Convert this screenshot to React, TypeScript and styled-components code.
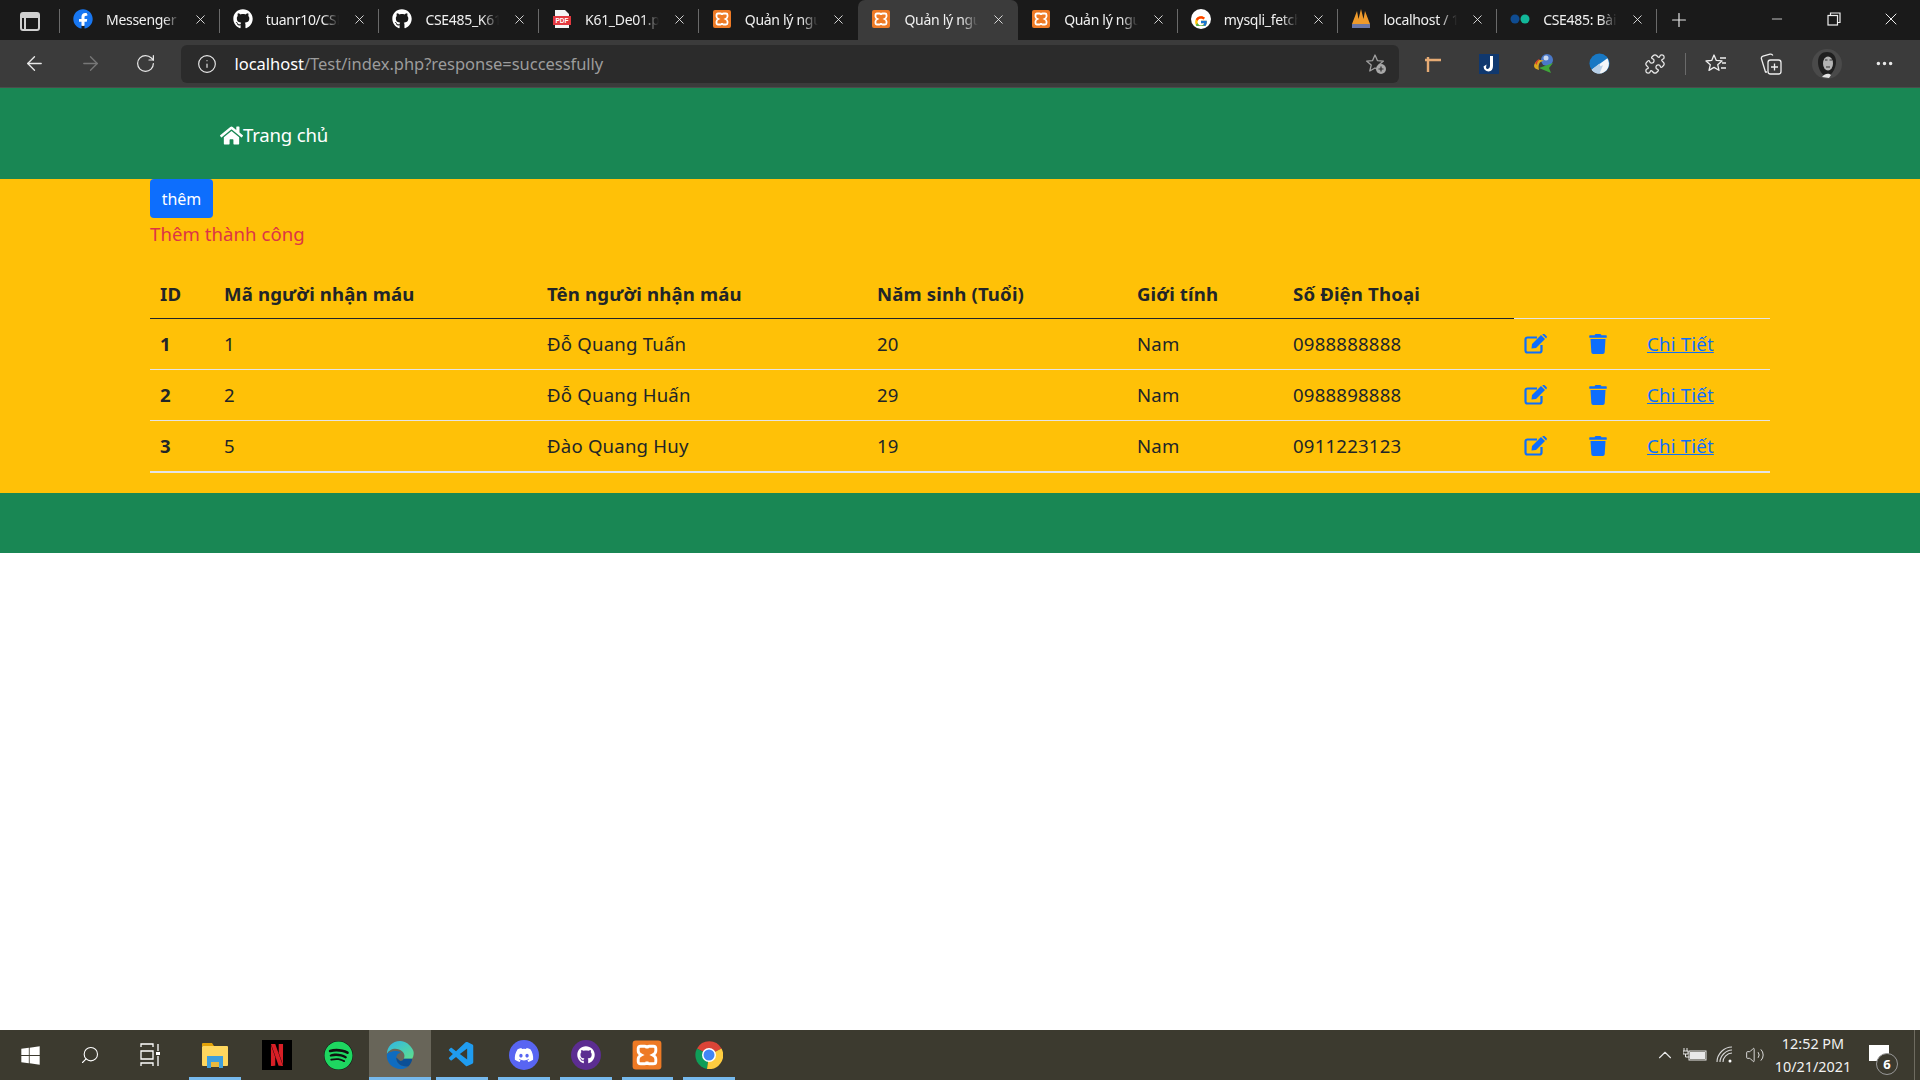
import React from "react";
import styled, { createGlobalStyle } from "styled-components";
import { ArrowLeft, ArrowRight, RotateCw, Info, X, Plus, Minus, Puzzle, MoreHorizontal, ChevronUp, Search, Volume2 } from "lucide-react";
import { FaFacebook, FaGithub, FaHome, FaTrash, FaWindows, FaDiscord, FaSpotify } from "react-icons/fa";
import { FcGoogle } from "react-icons/fc";
import { SiNetflix } from "react-icons/si";
import { VscVscode } from "react-icons/vsc";

const GlobalStyle = createGlobalStyle`
  html, body { margin: 0; padding: 0; background: #fff; }
  body { font-family: "Noto Sans", "Open Sans", sans-serif; color: #212529; font-size: 16px; }
`;

const Screen = styled.div`
  width: 1920px;
  height: 1080px;
  display: flex;
  flex-direction: column;
  overflow: hidden;
`;

/* browser chrome */
const TabStrip = styled.div`
  height: 40px;
  background: #1a1a1a;
  display: flex;
  align-items: stretch;
  flex-shrink: 0;
`;
const WorkspaceBtn = styled.div`
  width: 59px;
  display: flex;
  align-items: center;
  justify-content: center;
  border-right: 1px solid #6a6a6a;
  margin: 9px 0 7px;
`;
const WorkspaceIcon = styled.div`
  width: 16px;
  height: 15px;
  border: 2px solid #d0d0d0;
  border-radius: 3px;
  background: linear-gradient(#d0d0d0 0 4px, transparent 4px), linear-gradient(90deg, #d0d0d0 0 2px, transparent 2px);
  background-position: 0 0, 2px 0;
`;
const Tab = styled.div<{ $active?: boolean; $sep?: boolean }>`
  width: 159.7px;
  box-sizing: border-box;
  position: relative;
  display: flex;
  align-items: center;
  padding: 0 12px 2px 13px;
  gap: 13px;
  background: ${(p) => (p.$active ? "#3b3b3b" : "transparent")};
  border-radius: ${(p) => (p.$active ? "7px 7px 0 0" : "0")};
  &::after {
    content: "";
    display: ${(p) => (p.$sep ? "block" : "none")};
    position: absolute;
    right: 0;
    top: 9px;
    bottom: 7px;
    width: 1px;
    background: #6a6a6a;
  }
`;
const Favicon = styled.div`
  width: 20px;
  height: 20px;
  flex-shrink: 0;
  display: flex;
  align-items: center;
  justify-content: center;
`;
const TabTitle = styled.span`
  flex: 1;
  overflow: hidden;
  white-space: nowrap;
  color: #f0f0f0;
  font-size: 14px;
  letter-spacing: -0.3px;
  -webkit-mask-image: linear-gradient(90deg, #000 78%, transparent 100%);
  mask-image: linear-gradient(90deg, #000 78%, transparent 100%);
`;
const NewTab = styled.div`
  width: 44px;
  display: flex;
  align-items: center;
  justify-content: center;
  color: #e8e8e8;
`;
const WindowControls = styled.div`
  margin-left: auto;
  display: flex;
  color: #eee;
  padding-right: 1px;
`;
const WinBtn = styled.div`
  width: 57px;
  display: flex;
  align-items: center;
  justify-content: center;
  padding-bottom: 3px;
`;
const Toolbar = styled.div`
  height: 48px;
  box-sizing: border-box;
  background: #3b3b3b;
  display: flex;
  align-items: center;
  flex-shrink: 0;
  padding: 0 3px 0 7px;
  border-bottom: 1px solid #4c4c4c;
`;
const NavBtn = styled.div<{ $dim?: boolean }>`
  width: 55.5px;
  display: flex;
  justify-content: center;
  align-items: center;
  color: ${(p) => (p.$dim ? "#777" : "#e8e8e8")};
  flex-shrink: 0;
`;
const MenuBtn = styled(NavBtn)`
  margin-left: 2px;
`;
const AddressBar = styled.div`
  width: 1218px;
  height: 38px;
  margin-left: 7px;
  margin-right: 7px;
  background: #2b2b2b;
  border-radius: 6px;
  display: flex;
  align-items: center;
  padding: 0 12px 0 16px;
  box-sizing: border-box;
  color: #e8e8e8;
  gap: 18px;
`;
const Url = styled.div`
  flex: 1;
  font-size: 16.5px;
  letter-spacing: -0.03px;
  color: #9c9c9c;
  white-space: nowrap;
  b { color: #fff; font-weight: 400; }
`;
const ToolDivider = styled.div`
  width: 1px;
  height: 22px;
  background: #6a6a6a;
  margin: 0 2px;
  flex-shrink: 0;
`;

/* page */
const Page = styled.main`
  flex: 1;
  background: #fff;
`;
const Navbar = styled.nav`
  height: 91px;
  background: #198754;
  box-sizing: border-box;
  padding: 34px 0 0 220px;
`;
const HomeLink = styled.a`
  color: #fff;
  font-size: 18.6px;
  letter-spacing: -0.2px;
  display: inline-flex;
  align-items: center;
  line-height: 26px;
`;
const Content = styled.section`
  background: #ffc107;
  height: 314px;
  box-sizing: border-box;
  padding: 0 150px;
`;
const AddButton = styled.button`
  display: block;
  width: 63px;
  height: 39px;
  padding: 0;
  border: none;
  border-radius: 4px;
  background: #0d6efd;
  color: #fff;
  font: inherit;
  letter-spacing: 0;
`;
const Notice = styled.div`
  color: #dc3545;
  font-size: 18.6px;
  letter-spacing: 0.05px;
  line-height: 26px;
  margin-top: 3px;
  margin-bottom: 21px;
`;
const Table = styled.table`
  width: 1620px;
  table-layout: fixed;
  border-collapse: collapse;
  font-size: 18.6px;
  letter-spacing: 0.2px;
`;
const Th = styled.th<{ $blank?: boolean }>`
  text-align: left;
  font-weight: 700;
  padding: 0 10px 12px;
  height: 50px;
  box-sizing: border-box;
  vertical-align: bottom;
  letter-spacing: 0.15px;
  border-bottom: 1px solid ${(p) => (p.$blank ? "#e4e4e4" : "#212529")};
`;
const Td = styled.td<{ $bold?: boolean }>`
  height: 51px;
  box-sizing: border-box;
  padding: 0 10px;
  font-weight: ${(p) => (p.$bold ? 700 : 400)};
  border-bottom: 1px solid #e4e4e4;
  white-space: nowrap;
  tr:last-child & { border-bottom-width: 2px; height: 52px; }
`;
const RowIcon = styled.a`
  color: #0d6efd;
  display: inline-flex;
  vertical-align: middle;
  margin-bottom: 3px;
`;
const DetailLink = styled.a`
  color: #0d6efd;
  text-decoration: underline;
`;
const Footer = styled.footer`
  height: 60px;
  background: #198754;
`;

/* taskbar */
const Taskbar = styled.div`
  height: 50px;
  flex-shrink: 0;
  background: #3c3a2f;
  display: flex;
  align-items: stretch;
  color: #fff;
`;
const SysBtn = styled.div`
  width: 60px;
  display: flex;
  align-items: center;
  justify-content: center;
`;
const TaskSlot = styled.div<{ $active?: boolean; $open?: boolean }>`
  width: 61.8px;
  position: relative;
  display: flex;
  align-items: center;
  justify-content: center;
  background: ${(p) => (p.$active ? "#686559" : "transparent")};
  &::after {
    content: "";
    display: ${(p) => (p.$open ? "block" : "none")};
    position: absolute;
    left: ${(p) => (p.$active ? "0" : "5px")};
    right: ${(p) => (p.$active ? "0" : "5px")};
    bottom: 0;
    height: 3px;
    background: #76b9ed;
  }
`;
const ExplorerSlot = styled(TaskSlot)`
  margin-left: 4px;
`;
const NetflixBox = styled.div`
  width: 30px;
  height: 30px;
  background: #000;
  display: flex;
  align-items: center;
  justify-content: center;
  color: #d81f26;
`;
const SpotifyBox = styled.div`
  width: 29px;
  height: 29px;
  border-radius: 50%;
  background: #111;
  display: flex;
  color: #1ed760;
`;
const DiscordBox = styled.div`
  width: 30px;
  height: 30px;
  border-radius: 50%;
  background: #5865f2;
  display: flex;
  align-items: center;
  justify-content: center;
  color: #fff;
`;
const Tray = styled.div`
  margin-left: auto;
  display: flex;
  align-items: center;
  padding-right: 5px;
`;
const TrayIcon = styled.div`
  width: 30px;
  display: flex;
  justify-content: center;
  color: #e8e8e8;
`;
const Clock = styled.div`
  width: 86px;
  text-align: center;
  font-size: 14.4px;
  line-height: 23px;
  color: #f2f2f2;
`;
const NotifyBtn = styled.div`
  width: 52px;
  margin-left: 7px;
  padding-right: 12px;
  box-sizing: border-box;
  height: 100%;
  position: relative;
  display: flex;
  align-items: center;
  justify-content: center;
  border-right: 1px solid #6e6b60;
`;
const NotifyBubble = styled.div`
  width: 20px;
  height: 16px;
  background: #fff;
  margin: 0 8px 4px 0;
`;
const NotifyCount = styled.div`
  position: absolute;
  right: 16px;
  bottom: 5px;
  width: 20px;
  height: 20px;
  border-radius: 50%;
  background: #3c3a2f;
  border: 1px solid #999;
  font-size: 13px;
  font-weight: 700;
  display: flex;
  align-items: center;
  justify-content: center;
`;

const EditIcon = () => (
  <svg width="23" height="20" viewBox="0 0 23 20">
    <path d="M13 3.500H3.500a2 2 0 0 0-2 2v11a2 2 0 0 0 2 2h12a2 2 0 0 0 2-2V11" fill="none" stroke="currentColor" strokeWidth="2.200" />
    <path d="M8 10 17 1l4 4-9 9-4.500.6zM18.200.6l1-.5a1.200 1.200 0 0 1 1.500.2l1.800 1.800a1.200 1.200 0 0 1 .2 1.500l-.6 1z" fill="currentColor" />
  </svg>
);

const XamppIcon = ({ size = 20 }: { size?: number }) => (
  <svg width={size} height={size} viewBox="0 0 20 20">
    <rect x="1" y="1" width="18" height="18" rx="2" fill="#ee7a25" />
    <path
      d="M6 4.500h2.500q1.500 0 1.500 1.500q0-1.500 1.500-1.500H14q1.500 0 1.500 1.500v1.500q0 1.500-2 2.500q2 1 2 2.500V14q0 1.500-1.500 1.500h-2.500q-1.500 0-1.500-1.500q0 1.500-1.500 1.500H6q-1.500 0-1.500-1.500v-1.500q0-1.500 2-2.500q-2-1-2-2.500V6q0-1.500 1.500-1.500z"
      fill="none"
      stroke="#fff"
      strokeWidth="1.800"
    />
  </svg>
);

const PdfIcon = () => (
  <svg width="20" height="20" viewBox="0 0 20 20">
    <path d="M3 1h10l4 4v14H3z" fill="#f4f4f4" />
    <rect x="1" y="7" width="18" height="9" fill="#e2383f" />
    <text x="10" y="14.200" fontSize="6.500" fontWeight="700" fill="#fff" textAnchor="middle" fontFamily="Liberation Sans">PDF</text>
  </svg>
);

const PmaIcon = () => (
  <svg width="20" height="20" viewBox="0 0 20 20">
    <path d="M1 15 6 2l1.500 8L10 0l2.500 10L14 2l5 13z" fill="#ee9a2c" />
    <rect x="1" y="15" width="18" height="4" fill="#6b78a8" />
  </svg>
);

const DotsIcon = () => (
  <svg width="20" height="12" viewBox="0 0 20 12">
    <circle cx="5" cy="6" r="4.500" fill="#0f4c91" />
    <circle cx="15" cy="6" r="4.500" fill="#12b89a" />
  </svg>
);

const FacebookFav = () => (
  <svg width="20" height="20" viewBox="0 0 20 20">
    <circle cx="10" cy="10" r="7" fill="#fff" />
    <foreignObject width="20" height="20"><FaFacebook size={20} color="#1877f2" /></foreignObject>
  </svg>
);

const GoogleFav = () => (
  <svg width="20" height="20" viewBox="0 0 20 20">
    <circle cx="10" cy="10" r="10" fill="#fff" />
    <foreignObject x="3" y="3" width="14" height="14"><FcGoogle size={14} /></foreignObject>
  </svg>
);

const RestoreIcon = () => (
  <svg width="14" height="14" viewBox="0 0 14 14" fill="none" stroke="#eee" strokeWidth="1.200">
    <rect x="1" y="3.500" width="9.500" height="9.500" />
    <path d="M3.500 3.500V1H13v9.500h-2.500" />
  </svg>
);

const StarAddIcon = () => (
  <svg width="22" height="22" viewBox="0 0 22 22" fill="none">
    <path d="M10 2l2.400 5.600 6 .5-4.600 4 1.400 5.900L10 15l-5.200 3 1.400-5.900-4.600-4 6-.5z" stroke="#a0a0a0" strokeWidth="1.300" strokeLinejoin="round" />
    <circle cx="16" cy="16" r="5" fill="#a8a8a8" />
    <path d="M16 13.500v5M13.500 16h5" stroke="#2b2b2b" strokeWidth="1.200" />
  </svg>
);

const ExtPin = () => (
  <svg width="20" height="20" viewBox="0 0 20 20" fill="none" stroke="#e6ab74" strokeWidth="2.400">
    <path d="M2 6h16M5 3v15" />
  </svg>
);

const ExtJ = () => (
  <svg width="20" height="20" viewBox="0 0 20 20">
    <rect width="20" height="20" fill="#10386e" />
    <path d="M11 2h3v10q0 5-4.500 5.500-4.500-.5-5-5l3-2-.5 3q.5 2 2 1.500 2-1 2-3z" fill="#fff" />
  </svg>
);

const ExtIdm = () => (
  <svg width="22" height="22" viewBox="0 0 22 22">
    <circle cx="14" cy="7" r="6" fill="#4a78c8" />
    <circle cx="13" cy="5" r="2.500" fill="#c9d8f0" />
    <path d="M1 13c1-6 7-7 10-5-5 0-6 4-5 9-3-1-5-2-5-4z" fill="#d9a81f" />
    <path d="M6 15l14-5-4 5 2 5z" fill="#3fa63a" />
    <path d="M2 10c2-3 3-4 5-4-2 2-3 3-3 6z" fill="#d3402c" />
  </svg>
);

const ExtShield = () => (
  <svg width="21" height="21" viewBox="0 0 24 24">
    <circle cx="12" cy="12" r="11.500" fill="#1878c4" />
    <path d="M3 19 21 6a11.500 11.500 0 0 1-7 17.300C9 24 5.500 22 3 19z" fill="#f4f6f8" />
    <path d="M3 19l9-7 1 3 3-1-4 9.500C8.500 23.500 5 22 3 19z" fill="#b7d0e8" />
  </svg>
);

const FavoritesIcon = () => (
  <svg width="22" height="22" viewBox="0 0 22 22" fill="none" stroke="#eee" strokeWidth="1.300" strokeLinejoin="round">
    <path d="M9 2l2.300 5.400 5.700.5-4.300 3.800 1.300 5.600L9 14.400l-5 3 1.300-5.600L1 8l5.700-.6z" />
    <path d="M15 5h6M17 10h4M16 15h5" />
  </svg>
);

const CollectionsIcon = () => (
  <svg width="22" height="24" viewBox="0 0 22 24" fill="none" stroke="#eee" strokeWidth="1.300">
    <path d="M7 20H5.500L1.500 7c-.4-1.200.3-2.400 1.500-2.800L10 2.200c1.200-.3 2.400.3 2.800 1.300" />
    <rect x="8" y="8" width="13" height="14" rx="2.500" />
    <path d="M14.500 11.500v7M11 15h7" />
  </svg>
);

const Avatar = () => (
  <svg width="30" height="30" viewBox="0 0 30 30">
    <circle cx="15" cy="15" r="15" fill="#4a4a4a" />
    <path d="M6 13c0-7 4-10 9-10s9 3 9 10c0 5-3 11-6 13l-5 1c-4-2-7-8-7-14z" fill="#1f1f1f" />
    <ellipse cx="16" cy="14.500" rx="5" ry="7" fill="#b4b4b4" />
    <path d="M13 11h2.500M17.500 11h2.500M14 18h4" stroke="#333" strokeWidth="1.200" />
    <path d="M10 28c3-4 7-4 9-2l-2 3z" fill="#e2e2e2" />
  </svg>
);

const TaskViewIcon = () => (
  <svg width="20" height="24" viewBox="0 0 20 24" fill="none" stroke="#fff" strokeWidth="1.300">
    <path d="M1 4V1h12v3M1 8h12v8H1zM1 23v-3h12v3" />
    <path d="M18 1v7M18 13v10" />
    <path d="M16 9h4v3h-4z" fill="#fff" stroke="none" />
  </svg>
);

const ExplorerIcon = () => (
  <svg width="28" height="28" viewBox="0 0 28 28">
    <path d="M1 3a1 1 0 0 1 1-1h9l2 3H1z" fill="#e2a208" />
    <rect x="1" y="5" width="26" height="20" rx="1" fill="#ffd75e" />
    <path d="M6 27V15h16v12h-4v-6h-8v6z" fill="#3f9fdc" />
    <rect x="10" y="21" width="8" height="5" fill="#e9b83d" />
  </svg>
);

const EdgeIcon = () => (
  <svg width="30" height="30" viewBox="0 0 30 32">
    <defs>
      <linearGradient id="edgeTop" x1="0" y1="0" x2="1" y2="1">
        <stop offset="0" stopColor="#2fb4e8" />
        <stop offset="1" stopColor="#5ee08c" />
      </linearGradient>
    </defs>
    <path d="M15 1C7 1 1 7 1 15c2-5 8-7 13-5 5 2 7 6 5 10h9c2-3 2-7 1-9C26 5 21 1 15 1z" fill="url(#edgeTop)" />
    <path d="M1 15c-1 9 6 16 15 16 3 0 6-1 8-3-6 1-13-2-13-9 0-3 2-5 5-6-6-3-13 0-15 2z" fill="#0f6cc0" />
    <path d="M11 19c0 7 7 10 13 9 2-2 4-5 4-8h-9c-1 2-3 3-4 2-2-1-3-3-4-3z" fill="#0b4f96" />
  </svg>
);

const GithubDesktop = () => (
  <svg width="30" height="30" viewBox="0 0 30 30">
    <circle cx="15" cy="15" r="15" fill="#5c2d91" />
    <foreignObject x="6" y="6" width="18" height="18"><FaGithub size={18} color="#fff" /></foreignObject>
  </svg>
);

const ChromeIcon = () => (
  <svg width="28" height="28" viewBox="0 0 28 28">
    <path d="M14 14 2 7.500A14 14 0 0 1 26.500 7.500z" fill="#db4437" />
    <path d="M14 14 2 7.500a14 14 0 0 0 10 20.400z" fill="#0f9d58" />
    <path d="M14 14 26.500 7.500a14 14 0 0 1-14.500 20.400z" fill="#ffcd40" />
    <circle cx="14" cy="14" r="7" fill="#fff" />
    <circle cx="14" cy="14" r="5.500" fill="#4285f4" />
  </svg>
);

const BatteryIcon = () => (
  <svg width="24" height="14" viewBox="0 0 24 14">
    <rect x="6" y="3" width="17" height="9" fill="none" stroke="#e8e8e8" />
    <rect x="7" y="4" width="15" height="7" fill="#e8e8e8" />
    <path d="M1 0v3M4 0v3M0 3h5v3H0zM2.500 6v3h4" stroke="#e8e8e8" fill="none" />
  </svg>
);

const WifiIcon = () => (
  <svg width="18" height="18" viewBox="0 0 18 18" fill="none" stroke="#d8d8d8" strokeWidth="1.100">
    <path d="M1 16C1 8 8 1 16 1M4 16c0-6 6-12 12-12M7 16c0-4.500 4-9 9-9" />
    <circle cx="14" cy="15" r="1.500" fill="#fff" stroke="none" />
  </svg>
);

const tabs: { title: string; icon: React.ReactNode; active?: boolean; sep?: boolean }[] = [
  { title: "Messenger", icon: <FacebookFav />, sep: true },
  { title: "tuanr10/CSE485", icon: <FaGithub size={20} color="#fff" />, sep: true },
  { title: "CSE485_K61_2021", icon: <FaGithub size={20} color="#fff" />, sep: true },
  { title: "K61_De01.pdf", icon: <PdfIcon />, sep: true },
  { title: "Quản lý người nhận", icon: <XamppIcon /> },
  { title: "Quản lý người nhận", icon: <XamppIcon />, active: true },
  { title: "Quản lý người nhận", icon: <XamppIcon />, sep: true },
  { title: "mysqli_fetch_assoc", icon: <GoogleFav />, sep: true },
  { title: "localhost / 127.0", icon: <PmaIcon />, sep: true },
  { title: "CSE485: Bài tập", icon: <DotsIcon />, sep: true },
];

const rows = [
  { id: 1, code: 1, name: "Đỗ Quang Tuấn", age: 20, gender: "Nam", phone: "0988888888" },
  { id: 2, code: 2, name: "Đỗ Quang Huấn", age: 29, gender: "Nam", phone: "0988898888" },
  { id: 3, code: 5, name: "Đào Quang Huy", age: 19, gender: "Nam", phone: "0911223123" },
];

const colWidths = [64, 323, 330, 260, 156, 231, 64, 59, 133];

export default function App() {
  return (
    <Screen>
      <GlobalStyle />
      <TabStrip>
        <WorkspaceBtn>
          <WorkspaceIcon />
        </WorkspaceBtn>
        {tabs.map((t, i) => (
          <Tab key={i} $active={t.active} $sep={t.sep}>
            <Favicon>{t.icon}</Favicon>
            <TabTitle>{t.title}</TabTitle>
            <X size={15} color="#eee" strokeWidth={1.4} />
          </Tab>
        ))}
        <NewTab>
          <Plus size={22} strokeWidth={1.3} />
        </NewTab>
        <WindowControls>
          <WinBtn>
            <Minus size={16} strokeWidth={1.2} />
          </WinBtn>
          <WinBtn>
            <RestoreIcon />
          </WinBtn>
          <WinBtn>
            <X size={20} strokeWidth={1.2} />
          </WinBtn>
        </WindowControls>
      </TabStrip>
      <Toolbar>
        <NavBtn>
          <ArrowLeft size={23} strokeWidth={1.4} />
        </NavBtn>
        <NavBtn $dim>
          <ArrowRight size={23} strokeWidth={1.4} />
        </NavBtn>
        <NavBtn>
          <RotateCw size={21} strokeWidth={1.4} />
        </NavBtn>
        <AddressBar>
          <Info size={20} strokeWidth={1.4} />
          <Url>
            <b>localhost</b>/Test/index.php?response=successfully
          </Url>
          <StarAddIcon />
        </AddressBar>
        <NavBtn><ExtPin /></NavBtn>
        <NavBtn><ExtJ /></NavBtn>
        <NavBtn><ExtIdm /></NavBtn>
        <NavBtn><ExtShield /></NavBtn>
        <NavBtn><Puzzle size={22} strokeWidth={1.4} /></NavBtn>
        <ToolDivider />
        <NavBtn><FavoritesIcon /></NavBtn>
        <NavBtn><CollectionsIcon /></NavBtn>
        <NavBtn><Avatar /></NavBtn>
        <MenuBtn><MoreHorizontal size={21} strokeWidth={2} /></MenuBtn>
      </Toolbar>
      <Page>
        <Navbar>
          <HomeLink>
            <FaHome size={23} />
            Trang chủ
          </HomeLink>
        </Navbar>
        <Content>
          <AddButton>thêm</AddButton>
          <Notice>Thêm thành công</Notice>
          <Table>
            <colgroup>
              {colWidths.map((w, i) => (
                <col key={i} style={{ width: w }} />
              ))}
            </colgroup>
            <thead>
              <tr>
                <Th>ID</Th>
                <Th>Mã người nhận máu</Th>
                <Th>Tên người nhận máu</Th>
                <Th>Năm sinh (Tuổi)</Th>
                <Th>Giới tính</Th>
                <Th>Số Điện Thoại</Th>
                <Th $blank colSpan={3} />
              </tr>
            </thead>
            <tbody>
              {rows.map((r) => (
                <tr key={r.id}>
                  <Td $bold>{r.id}</Td>
                  <Td>{r.code}</Td>
                  <Td>{r.name}</Td>
                  <Td>{r.age}</Td>
                  <Td>{r.gender}</Td>
                  <Td>{r.phone}</Td>
                  <Td><RowIcon><EditIcon /></RowIcon></Td>
                  <Td><RowIcon><FaTrash size={20} /></RowIcon></Td>
                  <Td><DetailLink>Chi Tiết</DetailLink></Td>
                </tr>
              ))}
            </tbody>
          </Table>
        </Content>
        <Footer />
      </Page>
      <Taskbar>
        <SysBtn><FaWindows size={21} /></SysBtn>
        <SysBtn><Search size={20} strokeWidth={1.3} style={{ transform: "scaleX(-1)" }} /></SysBtn>
        <SysBtn><TaskViewIcon /></SysBtn>
        <ExplorerSlot $open><ExplorerIcon /></ExplorerSlot>
        <TaskSlot><NetflixBox><SiNetflix size={22} /></NetflixBox></TaskSlot>
        <TaskSlot><SpotifyBox><FaSpotify size={29} /></SpotifyBox></TaskSlot>
        <TaskSlot $active $open><EdgeIcon /></TaskSlot>
        <TaskSlot $open><VscVscode size={30} color="#1f9cf0" /></TaskSlot>
        <TaskSlot $open><DiscordBox><FaDiscord size={20} /></DiscordBox></TaskSlot>
        <TaskSlot $open><GithubDesktop /></TaskSlot>
        <TaskSlot $open><XamppIcon size={32} /></TaskSlot>
        <TaskSlot $open><ChromeIcon /></TaskSlot>
        <Tray>
          <TrayIcon><ChevronUp size={22} strokeWidth={1.2} /></TrayIcon>
          <TrayIcon><BatteryIcon /></TrayIcon>
          <TrayIcon><WifiIcon /></TrayIcon>
          <TrayIcon><Volume2 size={20} strokeWidth={1.1} /></TrayIcon>
          <Clock>
            12:52 PM
            <br />
            10/21/2021
          </Clock>
          <NotifyBtn>
            <NotifyBubble />
            <NotifyCount>6</NotifyCount>
          </NotifyBtn>
        </Tray>
      </Taskbar>
    </Screen>
  );
}
